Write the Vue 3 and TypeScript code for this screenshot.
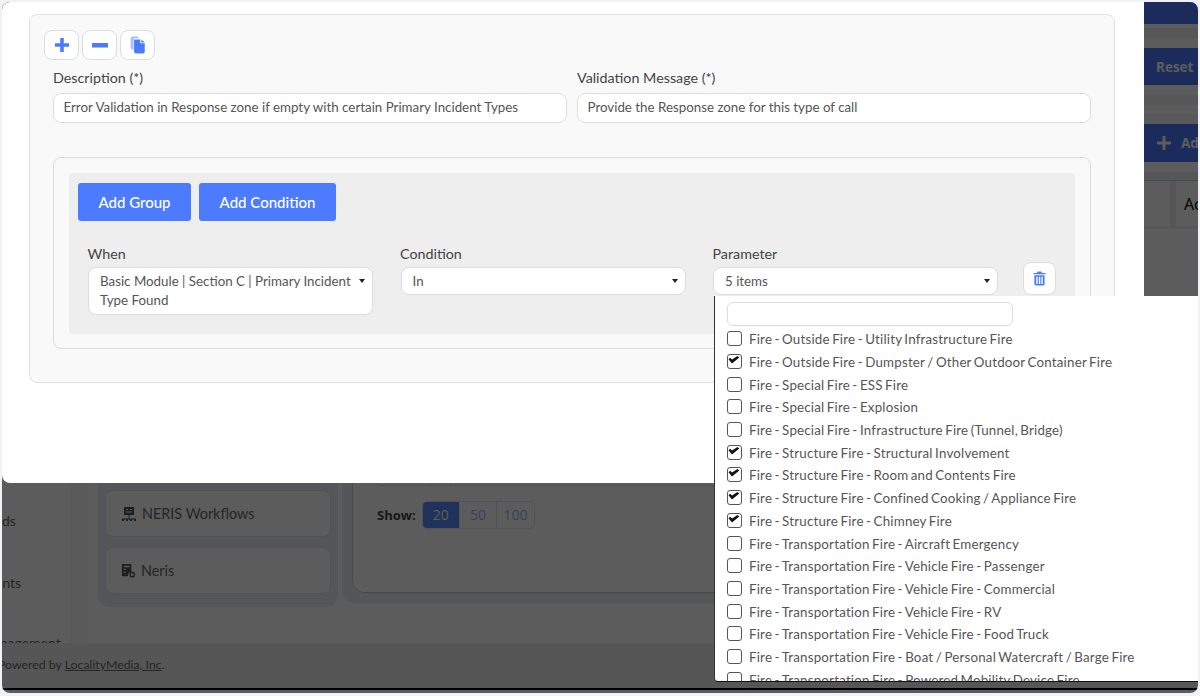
<script setup lang="ts">
interface Option {
    label: string;
    checked: boolean;
}

const options: Option[] = [
    { label: 'Fire - Outside Fire - Utility Infrastructure Fire', checked: false },
    { label: 'Fire - Outside Fire - Dumpster / Other Outdoor Container Fire', checked: true },
    { label: 'Fire - Special Fire - ESS Fire', checked: false },
    { label: 'Fire - Special Fire - Explosion', checked: false },
    { label: 'Fire - Special Fire - Infrastructure Fire (Tunnel, Bridge)', checked: false },
    { label: 'Fire - Structure Fire - Structural Involvement', checked: true },
    { label: 'Fire - Structure Fire - Room and Contents Fire', checked: true },
    { label: 'Fire - Structure Fire - Confined Cooking / Appliance Fire', checked: true },
    { label: 'Fire - Structure Fire - Chimney Fire', checked: true },
    { label: 'Fire - Transportation Fire - Aircraft Emergency', checked: false },
    { label: 'Fire - Transportation Fire - Vehicle Fire - Passenger', checked: false },
    { label: 'Fire - Transportation Fire - Vehicle Fire - Commercial', checked: false },
    { label: 'Fire - Transportation Fire - Vehicle Fire - RV', checked: false },
    { label: 'Fire - Transportation Fire - Vehicle Fire - Food Truck', checked: false },
    { label: 'Fire - Transportation Fire - Boat / Personal Watercraft / Barge Fire', checked: false },
    { label: 'Fire - Transportation Fire - Powered Mobility Device Fire', checked: false },
];
</script>

<template>
    <div class="shell">
        <div class="page">
            <aside class="side">
                <div class="side-item">Fields</div>
                <div class="side-item">Events</div>
                <div class="side-item last">Management</div>
            </aside>
            <div class="band"></div>
            <div class="menu-panel">
                <div class="menu-card">
                    <svg class="menu-icon" viewBox="0 0 16 16">
                        <path d="M3 1h10v8H3z M5 3v1h2V3z M9 3v1h2V3z M5 5.500v1h6v-1z" fill="#555" fill-rule="evenodd" />
                        <path d="M1 15v-2.500h14V15h-2v-1.500h-2V15H9v-1.500H7V15H5v-1.500H3V15z M7.500 9h1v3.500h-1z" fill="#555" />
                    </svg>
                    NERIS Workflows
                </div>
                <div class="menu-card">
                    <svg class="menu-icon small" viewBox="0 0 16 16">
                        <path d="M1 1h10v8.500a4 4 0 0 0-3.500 4.500H1z M3 3v1.500h6V3z M3 6v1.500h2V6z M3 9v1.500h2V9z" fill="#555" fill-rule="evenodd" />
                        <circle cx="12" cy="12.500" r="2.300" fill="none" stroke="#555" stroke-width="1.500" />
                    </svg>
                    Neris
                </div>
            </div>
            <main class="main">
                <div class="top-bar"></div>
                <div class="strip"></div>
                <button class="back-btn">Reset</button>
                <div class="strip lower"></div>
                <button class="back-btn add">
                    <svg class="add-icon" viewBox="0 0 14 14">
                        <path d="M5.500 0h3v5.500H14v3H8.500V14h-3V8.500H0v-3h5.500z" fill="#fff" />
                    </svg>
                    Add New
                </button>
                <div class="table-panel">
                    <div class="table-inner">
                        <div class="table-wrap">
                            <div class="table-head">
                                <div class="head-gap"></div>
                                <div class="head-cell">Actions</div>
                            </div>
                            <div class="table-body"></div>
                            <div class="table-foot">
                                <span class="foot-cell first"></span>
                                <span class="foot-cell second"></span>
                            </div>
                        </div>
                        <div class="pager">
                            <strong>Show:</strong>
                            <div class="pager-group">
                                <span class="pager-btn active">20</span>
                                <span class="pager-btn">50</span>
                                <span class="pager-btn">100</span>
                            </div>
                        </div>
                    </div>
                </div>
            </main>
        </div>
        <footer class="footer">Powered by <a>LocalityMedia, Inc</a>.</footer>

        <div class="backdrop"></div>

        <div class="modal">
            <div class="rule-box">
                <div class="tools">
                    <button class="tool-btn">
                        <svg viewBox="0 0 16 16" width="16" height="16">
                            <path d="M6.200 1h3.600v5.200H15v3.600H9.800V15H6.200V9.800H1V6.200h5.200z" fill="#4c7bff" />
                        </svg>
                    </button>
                    <button class="tool-btn">
                        <svg viewBox="0 0 16 16" width="16" height="16">
                            <path d="M0 6h16v4.600H0z" fill="#4c7bff" />
                        </svg>
                    </button>
                    <button class="tool-btn">
                        <svg viewBox="0 0 16 16" width="18" height="18">
                            <path d="M1.500 2a1.500 1.500 0 0 1 1.500-1.500h5L9 2H5.500A1.500 1.500 0 0 0 4 3.500V12H3a1.500 1.500 0 0 1-1.500-1.500z" fill="#a9bfff" />
                            <path d="M4.500 4a1 1 0 0 1 1-1h4.500v3.500h4V14a1.500 1.500 0 0 1-1.500 1.500H6A1.500 1.500 0 0 1 4.500 14z M11 3l3 2.700h-3z" fill="#4c7bff" />
                        </svg>
                    </button>
                </div>

                <div class="fields">
                    <div class="field">
                        <label>Description (*)</label>
                        <div class="text-input">Error Validation in Response zone if empty with certain Primary Incident Types</div>
                    </div>
                    <div class="field">
                        <label>Validation Message (*)</label>
                        <div class="text-input">Provide the Response zone for this type of call</div>
                    </div>
                </div>

                <div class="group">
                    <div class="group-inner">
                        <div class="group-actions">
                            <button class="primary group-btn">Add Group</button>
                            <button class="primary cond-btn">Add Condition</button>
                        </div>
                        <div class="cond-row">
                            <div class="cond-col">
                                <label>When</label>
                                <div class="select tall">
                                    <span>Basic Module | Section C | Primary Incident Type Found</span>
                                    <i class="caret"></i>
                                </div>
                            </div>
                            <div class="cond-col">
                                <label>Condition</label>
                                <div class="select">
                                    <span>In</span>
                                    <i class="caret"></i>
                                </div>
                            </div>
                            <div class="cond-col param">
                                <label>Parameter</label>
                                <div class="select">
                                    <span>5 items</span>
                                    <i class="caret"></i>
                                </div>
                                <div class="dropdown">
                                    <div class="search"></div>
                                    <div v-for="opt in options" :key="opt.label" class="option">
                                        <span class="check">
                                            <svg v-if="opt.checked" viewBox="0 0 13 13" width="13" height="13">
                                                <path d="M1.500 4.200 3.200 2.800 5 4.500 10.500 1 12.300 2.500 5 8.500z" fill="#111" />
                                            </svg>
                                        </span>
                                        <span>{{ opt.label }}</span>
                                    </div>
                                </div>
                            </div>
                            <button class="trash-btn">
                                <svg viewBox="0 0 14 16" width="13" height="15">
                                    <path d="M5 .5h4l.7 1.500H13.500v1.500H.5V2h3.600z" fill="#4c7bff" />
                                    <path d="M1.500 4.500h11V14a1.500 1.500 0 0 1-1.500 1.500H3A1.500 1.500 0 0 1 1.500 14z M3.500 6v8h1.500V6z M6.300 6v8h1.500V6z M9 6v8h1.500V6z" fill="#4c7bff" fill-rule="evenodd" />
                                </svg>
                            </button>
                        </div>
                    </div>
                </div>
            </div>
        </div>

        <div class="highlight"></div>
    </div>
</template>

<style>
html,
body {
    margin: 0;
    background: #f1f1f8;
    overflow: hidden;
}
</style>

<style scoped>
.shell {
    position: relative;
    margin: 2px 2px 0;
    height: 691px;
    border-radius: 8px;
    overflow: hidden;
    background: #fff;
    font-family: Lato, 'Liberation Sans', sans-serif;
    color: #555;
    font-size: 13.333px;
}
.page {
    display: flex;
    height: 641px;
}
.side {
    width: 68px;
    flex: none;
    overflow: hidden;
    background: #fff;
    color: #666;
    position: relative;
    padding-top: 510px;
    box-sizing: border-box;
    font-size: 14px;
}
.side-item {
    height: 62px;
    margin-left: -22px;
    white-space: nowrap;
    line-height: 18px;
}
.side-item.last {
    margin-top: -2px;
}
.band {
    width: 18px;
    flex: none;
    background: #f6f6f6;
}
.menu-panel {
    margin: 0 0 36px 10px;
    width: 240px;
    flex: none;
    box-sizing: border-box;
    padding: 0 7px 13px;
    background: #e9eef5;
    border-radius: 0 0 12px 12px;
    display: flex;
    flex-direction: column;
    justify-content: flex-end;
    gap: 10px;
}
.menu-card {
    height: 47px;
    box-sizing: border-box;
    background: #fff;
    border: 1px solid #dde3ea;
    border-radius: 8px;
    display: flex;
    align-items: center;
    gap: 5px;
    padding-left: 15px;
    font-size: 14.400px;
    color: #666;
}
.menu-icon {
    width: 16px;
    height: 16px;
}
.menu-icon.small {
    width: 15px;
    height: 15px;
}
.main {
    margin-left: 4px;
    flex: 1;
    min-width: 0;
    display: flex;
    flex-direction: column;
}
.top-bar {
    height: 22px;
    flex: none;
    background: #4c7bff;
}
.strip {
    height: 24px;
    flex: none;
    margin: 0 -10px;
    background: linear-gradient(#fff 4px, #f0f0f0 4px, #f0f0f0 14px, #fff 14px);
}
.strip.lower {
    height: 39px;
    background: linear-gradient(#fff 10px, #f0f0f0 10px, #f0f0f0 20px, #fff 20px, #fff 29px, #f5f5f5 29px);
}
.back-btn {
    flex: none;
    width: 90px;
    height: 37px;
    margin-left: 786px;
    padding: 0 0 0 28px;
    text-align: left;
    border: 0;
    background: #4c7bff;
    color: #fff;
    font: 700 13.500px 'Open Sans', sans-serif;
}
.back-btn.add {
    height: 38px;
    display: flex;
    align-items: center;
    gap: 10px;
    padding-left: 29px;
    white-space: nowrap;
}
.add-icon {
    width: 14px;
    height: 14px;
    flex: none;
}
.table-panel {
    flex: 1;
    margin: 10px -40px 40px 0;
    padding: 8px 0 10px 10px;
    background: #e9eef5;
    border-radius: 0 0 0 12px;
    display: flex;
}
.table-inner {
    flex: 1;
    background: #fff;
    border: 1px solid #c4c8ce;
    border-radius: 0 0 0 12px;
    padding: 0 0 0 24px;
}
.table-wrap {
    height: 305px;
    display: flex;
    flex-direction: column;
}
.table-head {
    height: 47px;
    flex: none;
    display: flex;
    border-bottom: 1px solid #e4e4e4;
    box-sizing: border-box;
}
.head-gap {
    width: 793px;
    flex: none;
    border-right: 5px solid #eee;
}
.head-cell {
    padding: 0 0 0 8px;
    line-height: 47px;
    font-size: 16px;
    color: #000;
    font-family: 'Open Sans', sans-serif;
    border-left: 1px solid #eee;
}
.table-body {
    flex: 1;
}
.table-foot {
    height: 4px;
    flex: none;
    border: 1px solid #dcdcdc;
    border-top: 0;
    display: flex;
}
.foot-cell.first {
    width: 52px;
    border-right: 1px solid #dcdcdc;
}
.foot-cell.second {
    width: 19px;
    border-right: 1px solid #dcdcdc;
}
.pager {
    margin-top: 15px;
    display: flex;
    align-items: center;
    gap: 6px;
    font-family: 'Open Sans', sans-serif;
    font-size: 13px;
}
.pager strong {
    color: #444;
}
.pager-group {
    display: flex;
    height: 28px;
    width: 113px;
    border: 1px solid #e3e6ee;
    border-radius: 5px;
    overflow: hidden;
    box-sizing: border-box;
    font-size: 14px;
}
.pager-btn {
    flex: 1;
    box-sizing: border-box;
    line-height: 26px;
    text-align: center;
    color: #98b8ff;
    border-left: 1px solid #e3e6ee;
}
.pager-btn.active {
    background: #5a88ff;
    color: #fff;
    border-left: 0;
}
.footer {
    height: 47px;
    box-sizing: border-box;
    border-bottom: 2px solid #000;
    background: #eee;
    padding-top: 13px;
    margin-left: -4px;
    line-height: 18px;
    color: #666;
    font-size: 12.300px;
}
.footer a {
    text-decoration: underline;
}
.backdrop {
    position: absolute;
    inset: 0;
    background: rgba(0, 0, 0, 0.64);
}
.modal {
    position: absolute;
    left: 0;
    top: 0;
    width: 1142px;
    height: 481px;
    background: #fff;
    border-radius: 8px 0 0 8px;
}
.rule-box {
    box-sizing: border-box;
    margin: 12px 0 0 27px;
    width: 1086px;
    height: 369px;
    padding: 15px 14px;
    border: 1px solid #e2e2e2;
    border-radius: 8px;
    background: #f9f9f9;
}
.tools {
    display: flex;
    gap: 3px;
}
.tool-btn {
    width: 35px;
    height: 30px;
    padding: 0;
    display: flex;
    align-items: center;
    justify-content: center;
    background: #fff;
    border: 1px solid #ddd;
    border-radius: 8px;
}
.fields {
    display: grid;
    grid-template-columns: 514px 514px;
    gap: 10px;
    margin: 9px 9px 0;
}
label {
    display: block;
    font-size: 14.300px;
    line-height: 18px;
    color: #444;
}
.text-input {
    margin-top: 6px;
    box-sizing: border-box;
    height: 30px;
    padding: 0 9.500px;
    line-height: 27px;
    background: #fff;
    border: 1px solid #ddd;
    border-radius: 8px;
    white-space: nowrap;
}
.group {
    box-sizing: border-box;
    margin: 34px 9px 0;
    height: 192px;
    padding: 15px;
    background: #f9f9f9;
    border: 1px solid #ddd;
    border-radius: 8px;
}
.group-inner {
    height: 161px;
    box-sizing: border-box;
    padding: 10px 9px;
    background: #eee;
    border-radius: 4px;
}
.group-actions {
    display: flex;
    gap: 8px;
}
.primary {
    height: 38px;
    padding: 0;
    border: 0;
    border-radius: 3px;
    background: #4c7bff;
    color: #fff;
    font: 500 15px Lato, sans-serif;
}
.group-btn {
    width: 113px;
}
.cond-btn {
    width: 137px;
}
.cond-row {
    display: flex;
    margin: 24px 0 0 10px;
    gap: 26px;
}
.cond-col {
    width: 286.500px;
    flex: none;
    position: relative;
}
.cond-col label {
    margin-left: -0.500px;
}
.select {
    position: relative;
    margin-top: 4px;
    box-sizing: border-box;
    width: 285px;
    height: 28px;
    padding: 0 17px 0 11px;
    line-height: 26px;
    background: #fff;
    border: 1px solid #ddd;
    border-radius: 8px;
}
.select.tall {
    height: 48px;
    padding-top: 4px;
    line-height: 19px;
}
.caret {
    position: absolute;
    right: 7px;
    top: 11px;
    border: 3.500px solid transparent;
    border-top: 4px solid #222;
    border-bottom: 0;
}
.trash-btn {
    width: 33px;
    height: 33px;
    margin: 17px 0 0 -2.500px;
    padding: 0;
    display: flex;
    align-items: center;
    justify-content: center;
    background: #fff;
    border: 1px solid #ddd;
    border-radius: 8px;
}
.dropdown {
    position: absolute;
    left: 1px;
    top: 51px;
    width: 485px;
    height: 386px;
    box-sizing: border-box;
    padding: 6px 0 0 12px;
    overflow: hidden;
    background: #fff;
    border-left: 1px solid #333;
    border-bottom: 1px solid #111;
    border-radius: 0 0 0 4px;
    z-index: 2;
}
.search {
    width: 286px;
    height: 24px;
    box-sizing: border-box;
    background: #fff;
    border: 1px solid #ddd;
    border-radius: 6px;
    margin-bottom: 1.500px;
}
.option {
    height: 22.700px;
    display: flex;
    align-items: center;
    gap: 7px;
    white-space: nowrap;
    color: #555;
    letter-spacing: 0.2px;
    word-spacing: -1.200px;
}
.option span:last-child {
    padding-top: 1px;
}
.check {
    width: 15px;
    height: 15px;
    flex: none;
    box-sizing: border-box;
    border: 1.300px solid #555;
    border-radius: 3px;
    display: block;
    line-height: 0;
}
.check svg {
    display: block;
    margin: 0 0 0 -1px;
}
.highlight {
    position: absolute;
    left: 715px;
    top: 294px;
    width: 421px;
    height: 370px;
    box-sizing: border-box;
    border: 3px solid #f5334a;
    border-radius: 12px;
    pointer-events: none;
}
</style>
